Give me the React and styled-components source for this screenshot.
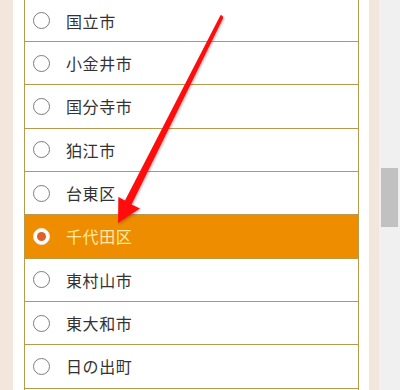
import React from "react";
import styled, { createGlobalStyle } from "styled-components";

const GlobalStyle = createGlobalStyle`
  html, body {
    margin: 0;
    padding: 0;
    height: 390px;
    overflow: hidden;
    background: #ffffff;
  }
`;

const Frame = styled.div`
  position: relative;
  display: flex;
  width: 400px;
  height: 390px;
  overflow: hidden;
  font-family: "Noto Sans CJK JP", "Noto Sans", sans-serif;
`;

const Strip = styled.div`
  flex: 0 0 ${(p) => p.$w}px;
  background: #f3e6dd;
`;

const Main = styled.div`
  flex: 1;
  padding: 0 10px 0 11px;
  background: #ffffff;
`;

const List = styled.ul`
  list-style: none;
  margin: 0;
  padding: 0;
  min-height: 390px;
  border-left: 1px solid #b89a4c;
  border-right: 1px solid #b89a4c;
`;

const Row = styled.li`
  display: flex;
  align-items: center;
  gap: 16px;
  height: ${(p) => (p.$first ? 41 : 42.33)}px;
  padding-left: 8px;
  border-bottom: 1px solid #b89a4c;
  background: ${(p) => (p.$active ? "#ee8d00" : "#ffffff")};
  color: ${(p) => (p.$active ? "#ffeaa6" : "#333333")};
  font-size: 16px;
  letter-spacing: 0.6px;
`;

const Radio = styled.span`
  position: relative;
  flex: 0 0 auto;
  width: 17px;
  height: 17px;
  box-sizing: border-box;
  border-radius: 50%;
  border: 1.5px solid ${(p) => (p.$checked ? "#f6e6d0" : "#7c7c7c")};
  background: #ffffff;
  &::after {
    content: "";
    display: ${(p) => (p.$checked ? "block" : "none")};
    position: absolute;
    left: 50%;
    top: 50%;
    width: 9px;
    height: 9px;
    margin: -4.5px 0 0 -4.5px;
    border-radius: 50%;
    background: #df6129;
  }
`;

const Track = styled.div`
  flex: 0 0 17px;
  background: #f0f0f0;
  padding: 168px 2px 0 2px;
`;

const Thumb = styled.div`
  height: 59px;
  background: #c1c1c1;
`;

const Arrow = styled.svg`
  position: absolute;
  left: 0;
  top: 0;
  pointer-events: none;
`;

const cities = [
  "国立市",
  "小金井市",
  "国分寺市",
  "狛江市",
  "台東区",
  "千代田区",
  "東村山市",
  "東大和市",
  "日の出町",
];

const App = () => {
  const selected = "千代田区";
  return (
    <>
      <GlobalStyle />
      <Frame>
        <Strip $w={13} />
        <Main>
          <List>
            {cities.map((c, i) => (
              <Row key={c} $first={i === 0} $active={c === selected}>
                <Radio $checked={c === selected} />
                {c}
              </Row>
            ))}
          </List>
        </Main>
        <Strip $w={10} />
        <Track>
          <Thumb />
        </Track>
        <Arrow width="400" height="390" viewBox="0 0 400 390">
          <defs>
            <filter id="sh" x="-20%" y="-20%" width="140%" height="140%">
              <feDropShadow dx="1" dy="1.5" stdDeviation="1.2" floodColor="#000" floodOpacity="0.25" />
            </filter>
          </defs>
          <path
            d="M221 15 Q223.5 16 223.2 18 L131.6 204.4 L140 208.5 L118 223 L118.4 197 L125 200.6 L220.2 15.8 Z"
            fill="#ff0a0a"
            filter="url(#sh)"
          />
        </Arrow>
      </Frame>
    </>
  );
};

export default App;
